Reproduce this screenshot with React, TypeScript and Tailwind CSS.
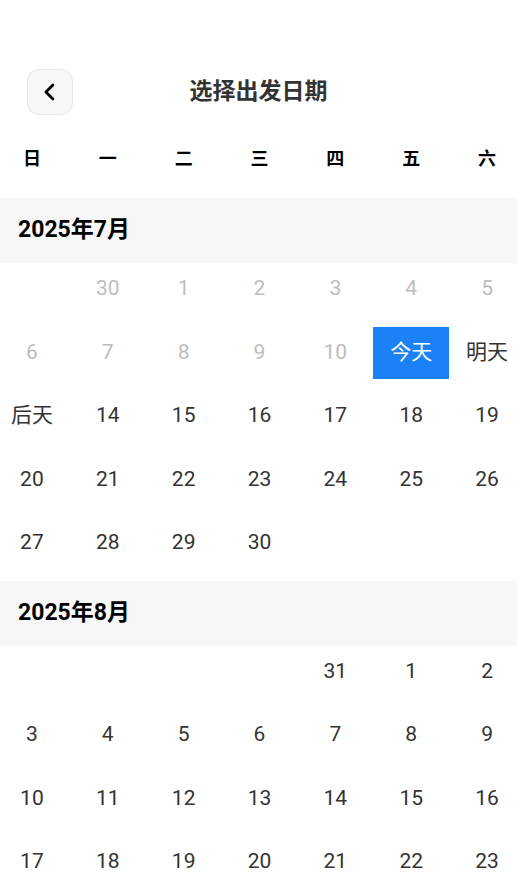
type Day = { label: string; muted?: boolean; today?: boolean } | null

const weekdays = ['日', '一', '二', '三', '四', '五', '六']

function range(a: number, b: number, muted = false): Day[] {
  const out: Day[] = []
  for (let i = a; i <= b; i++) out.push({ label: String(i), muted })
  return out
}

const july: Day[] = [
  null,
  { label: '30', muted: true },
  ...range(1, 10, true),
  { label: '今天', today: true },
  { label: '明天' },
  { label: '后天' },
  ...range(14, 30),
]

const august: Day[] = [null, null, null, null, { label: '31' }, ...range(1, 30)]

function BackButton() {
  return (
    <button className="w-[46px] h-[46px] rounded-[12px] bg-[#f7f7f7] border border-[#e6e6e6] flex items-center justify-center justify-self-start">
      <svg width="28" height="28" viewBox="0 0 24 24" fill="none" stroke="#000" strokeWidth="2.4" strokeLinecap="round" strokeLinejoin="round">
        <path d="M14.5 6l-6 6 6 6" />
      </svg>
    </button>
  )
}

function MonthBlock({ title, days }: { title: string; days: Day[] }) {
  return (
    <div className="mb-[11.5px]">
      <div className="h-[65px] bg-[#f7f7f7] px-[18px] flex items-center text-[23px] font-bold text-black">{title}</div>
      <div className="w-[531px] -ml-[6px] grid grid-cols-7 gap-y-[11.5px]">
        {days.map((d, i) => (
          <div
            key={i}
            className={
              d?.today
                ? 'h-[52px] flex items-center justify-center bg-[#1a82f6] text-white text-[21px]'
                : d?.muted
                ? 'h-[52px] flex items-center justify-center text-[#bdbdbd] text-[21px]'
                : 'h-[52px] flex items-center justify-center text-[#333] text-[21px]'
            }
          >
            {d?.label}
          </div>
        ))}
      </div>
    </div>
  )
}

export default function App() {
  return (
    <div className="w-full h-[886px] bg-white overflow-hidden font-['Roboto','Noto_Sans_CJK_SC',sans-serif]">
      <div className="pt-[69px] px-[27px] grid grid-cols-[1fr_auto_1fr] items-center h-[115px]">
        <BackButton />
        <h1 className="text-[23px] font-bold text-[#333]">选择出发日期</h1>
        <div />
      </div>
      <div className="mt-[23px] w-[531px] -ml-[6px] grid grid-cols-7 h-[40px] items-center">
        {weekdays.map((w) => (
          <div key={w} className="text-center text-[18px] font-bold text-black">{w}</div>
        ))}
      </div>
      <div className="mt-[20px]">
        <MonthBlock title="2025年7月" days={july} />
        <MonthBlock title="2025年8月" days={august} />
      </div>
    </div>
  )
}
